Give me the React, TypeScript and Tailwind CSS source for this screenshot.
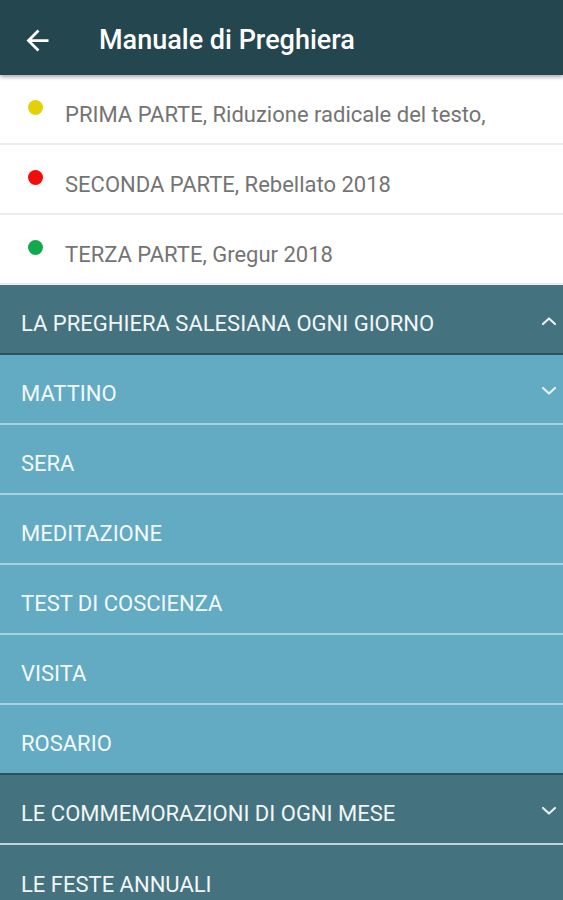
const parts = [
  { color: "bg-[#e2d10a]", label: "PRIMA PARTE, Riduzione radicale del testo," },
  { color: "bg-[#f40c0c]", label: "SECONDA PARTE, Rebellato 2018" },
  { color: "bg-[#12a84c]", label: "TERZA PARTE, Gregur 2018" },
];

const daily = [
  { label: "MATTINO", chevron: "down" },
  { label: "SERA" },
  { label: "MEDITAZIONE" },
  { label: "TEST DI COSCIENZA" },
  { label: "VISITA" },
  { label: "ROSARIO" },
];

function Chevron({ dir }: { dir: "up" | "down" }) {
  return (
    <svg width="16" height="10" viewBox="0 0 16 10" className="mt-[3px] text-[#e8f0f2]">
      <polyline
        points={dir === "up" ? "2,8 8,2.5 14,8" : "2,2 8,7.5 14,2"}
        fill="none"
        stroke="currentColor"
        strokeWidth="2.2"
        strokeLinecap="round"
        strokeLinejoin="round"
      />
    </svg>
  );
}

export default function App() {
  return (
    <div className="w-[563px] h-[900px] overflow-hidden bg-white font-['Roboto',sans-serif]">
      {/* HEADER */}
      <header className="relative z-10 h-[75px] flex items-center bg-[#24464f] shadow-[0_2px_4px_rgba(0,0,0,0.35)]">
        <svg width="33" height="33" viewBox="0 0 24 24" className="ml-[21px] mt-[6px] text-white">
          <path fill="currentColor" d="M20 11H7.83l5.59-5.59L12 4l-8 8 8 8 1.41-1.41L7.83 13H20v-2z" />
        </svg>
        <h1 className="ml-[45px] mt-[6px] text-[27px] font-medium text-white">Manuale di Preghiera</h1>
      </header>

      {/* PARTS */}
      {parts.map((p) => (
        <div key={p.label} className="h-[70px] flex items-center border-b-2 border-[#ececec]">
          <span className={`ml-[28px] w-[15px] h-[15px] rounded-full ${p.color} -mt-[4px]`} />
          <span className="ml-[22px] mt-[10px] text-[22px] text-[#747474]">{p.label}</span>
        </div>
      ))}

      {/* SECTION */}
      <div className="h-[70px] flex items-center justify-between bg-[#44737f] border-b-2 border-[#2c525c] pl-[21px] pr-[6px]">
        <span className="mt-[8px] text-[22px] text-[#f2f6f7]">LA PREGHIERA SALESIANA OGNI GIORNO</span>
        <Chevron dir="up" />
      </div>

      {daily.map((d, i) => (
        <div
          key={d.label}
          className={`h-[70px] flex items-center justify-between bg-[#62abc3] pl-[21px] pr-[6px] border-b-2 ${
            i === daily.length - 1 ? "border-[#2c525c]" : "border-[#a9d1de]"
          }`}
        >
          <span className="mt-[8px] text-[22px] text-[#f4f9fb]">{d.label}</span>
          {d.chevron && <Chevron dir="down" />}
        </div>
      ))}

      <div className="h-[70px] flex items-center justify-between bg-[#44737f] border-b-2 border-[#c3d3d7] pl-[21px] pr-[6px]">
        <span className="mt-[8px] text-[22px] text-[#f2f6f7]">LE COMMEMORAZIONI DI OGNI MESE</span>
        <Chevron dir="down" />
      </div>
      <div className="h-[70px] flex items-center bg-[#44737f] pl-[21px]">
        <span className="mt-[8px] text-[22px] text-[#f2f6f7]">LE FESTE ANNUALI</span>
      </div>
    </div>
  );
}
